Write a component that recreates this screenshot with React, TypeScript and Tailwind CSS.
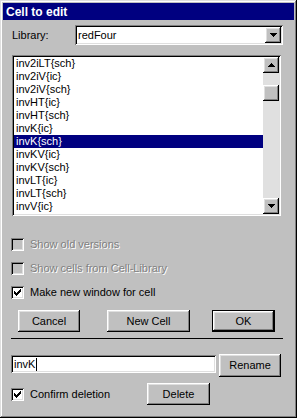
import React from "react";

const raised =
  "shadow-[inset_-1px_-1px_#000,inset_1px_1px_#fff,inset_-2px_-2px_#808080,inset_2px_2px_#dfdfdf]";
const sunken =
  "shadow-[inset_1px_1px_#808080,inset_-1px_-1px_#fff,inset_2px_2px_#000,inset_-2px_-2px_#dfdfdf]";

function Arrow({ up }: { up?: boolean }) {
  const rows = up ? [[3, 1], [2, 3], [1, 5], [0, 7]] : [[0, 7], [1, 5], [2, 3], [3, 1]];
  return (
    <svg width="7" height="4" viewBox="0 0 7 4" shapeRendering="crispEdges">
      {rows.map(([x, w], i) => (
        <rect key={i} x={x} y={i} width={w} height={1} fill="#000" />
      ))}
    </svg>
  );
}

function Check() {
  const runs: [number, number, number][] = [
    [6, 0, 1],
    [5, 1, 2],
    [0, 2, 1],
    [4, 2, 3],
    [0, 3, 2],
    [3, 3, 3],
    [0, 4, 5],
    [1, 5, 3],
    [2, 6, 1],
  ];
  return (
    <svg width="7" height="7" viewBox="0 0 7 7" shapeRendering="crispEdges">
      {runs.map(([x, y, w], i) => (
        <rect key={i} x={x} y={y} width={w} height={1} fill="#000" />
      ))}
    </svg>
  );
}

function CheckBox({
  label,
  checked,
  disabled,
}: {
  label: string;
  checked?: boolean;
  disabled?: boolean;
}) {
  return (
    <div className="flex items-center h-[13px]">
      <div
        className={`w-[13px] h-[13px] flex items-center justify-center ${sunken} ${
          disabled ? "bg-[#c0c0c0]" : "bg-white"
        }`}
      >
        {checked && <Check />}
      </div>
      <span
        className={`ml-[6px] leading-[13px] ${
          disabled ? "text-[#808080] [text-shadow:1px_1px_0_#fff]" : "text-black"
        }`}
      >
        {label}
      </span>
    </div>
  );
}

function Button({
  label,
  w,
  h = "h-[22px]",
  def,
}: {
  label: string;
  w: string;
  h?: string;
  def?: boolean;
}) {
  if (def) {
    return (
      <div className={`${w} ${h} border border-black bg-[#c0c0c0] flex`}>
        <div className={`flex-1 flex items-center justify-center ${raised}`}>{label}</div>
      </div>
    );
  }
  return (
    <div className={`${w} ${h} bg-[#c0c0c0] flex items-center justify-center ${raised}`}>
      {label}
    </div>
  );
}

const items = [
  "inv2iLT{sch}",
  "inv2iV{ic}",
  "inv2iV{sch}",
  "invHT{ic}",
  "invHT{sch}",
  "invK{ic}",
  "invK{sch}",
  "invKV{ic}",
  "invKV{sch}",
  "invLT{ic}",
  "invLT{sch}",
  "invV{ic}",
];

export default function App() {
  return (
    <div
      className="w-[297px] h-[418px] bg-[#c0c0c0] p-[3px] flex flex-col text-[11px] text-black shadow-[inset_-1px_-1px_#000,inset_1px_1px_#dfdfdf,inset_-2px_-2px_#808080,inset_2px_2px_#fff]"
      style={{ fontFamily: '"Liberation Sans", Arial, sans-serif' }}
    >
      {/* Title bar */}
      <div className="h-[17px] bg-[#000080] flex items-center pl-[3px]">
        <span className="text-white font-bold text-[12px] leading-none">Cell to edit</span>
      </div>

      {/* Library row */}
      <div className="mt-[5px] flex items-center h-[20px]">
        <span className="ml-[9px] w-[63px]">Library:</span>
        <div className={`w-[208px] h-[20px] bg-white flex items-center p-[2px] ${sunken}`}>
          <span className="flex-1 pl-[1px]">redFour</span>
          <div className={`w-[16px] h-[16px] bg-[#c0c0c0] flex items-center justify-center ${raised}`}>
            <Arrow />
          </div>
        </div>
      </div>

      {/* List box */}
      <div className={`mt-[10px] ml-[9px] w-[269px] h-[161px] bg-white p-[2px] flex ${sunken}`}>
        <div className="flex-1 flex flex-col pt-0">
          {items.map((it) => {
            const sel = it === "invK{sch}";
            return (
              <div
                key={it}
                className={`h-[13px] leading-[13px] pl-[2px] whitespace-nowrap ${
                  sel ? "bg-[#000080] text-white" : ""
                }`}
              >
                {it}
              </div>
            );
          })}
        </div>
        <div className="w-[16px] flex flex-col bg-[#e0e0e0]">
          <div className={`h-[16px] bg-[#c0c0c0] flex items-center justify-center ${raised}`}>
            <Arrow up />
          </div>
          <div className="h-[12px]" />
          <div className={`h-[16px] bg-[#c0c0c0] ${raised}`} />
          <div className="flex-1" />
          <div className={`h-[16px] bg-[#c0c0c0] flex items-center justify-center ${raised}`}>
            <Arrow />
          </div>
        </div>
      </div>

      {/* Checkboxes */}
      <div className="mt-[22px] ml-[8px] flex flex-col gap-[11px]">
        <CheckBox label="Show old versions" disabled />
        <CheckBox label="Show cells from Cell-Library" disabled />
        <CheckBox label="Make new window for cell" checked />
      </div>

      {/* Buttons row */}
      <div className="mt-[11px] flex">
        <div className="ml-[15px]">
          <Button label="Cancel" w="w-[62px]" />
        </div>
        <div className="ml-[27px]">
          <Button label="New Cell" w="w-[83px]" />
        </div>
        <div className="ml-[22px]">
          <Button label="OK" w="w-[63px]" def />
        </div>
      </div>

      {/* Separator */}
      <div className="mt-[6px] ml-[8px] w-[272px] h-[1px] bg-black" />

      {/* Rename row */}
      <div className="mt-[15px] flex items-start">
        <div className={`mt-[1px] ml-[8px] w-[205px] h-[18px] bg-white flex items-center px-[3px] ${sunken}`}>
          <span className="border-r border-black leading-[13px] pr-[1px]">invK</span>
        </div>
        <div className="ml-[3px]">
          <Button label="Rename" w="w-[62px]" h="h-[23px]" />
        </div>
      </div>

      {/* Confirm row */}
      <div className="mt-[6px] flex items-center">
        <div className="ml-[8px] w-[136px]">
          <CheckBox label="Confirm deletion" checked />
        </div>
        <Button label="Delete" w="w-[63px]" />
      </div>
    </div>
  );
}
